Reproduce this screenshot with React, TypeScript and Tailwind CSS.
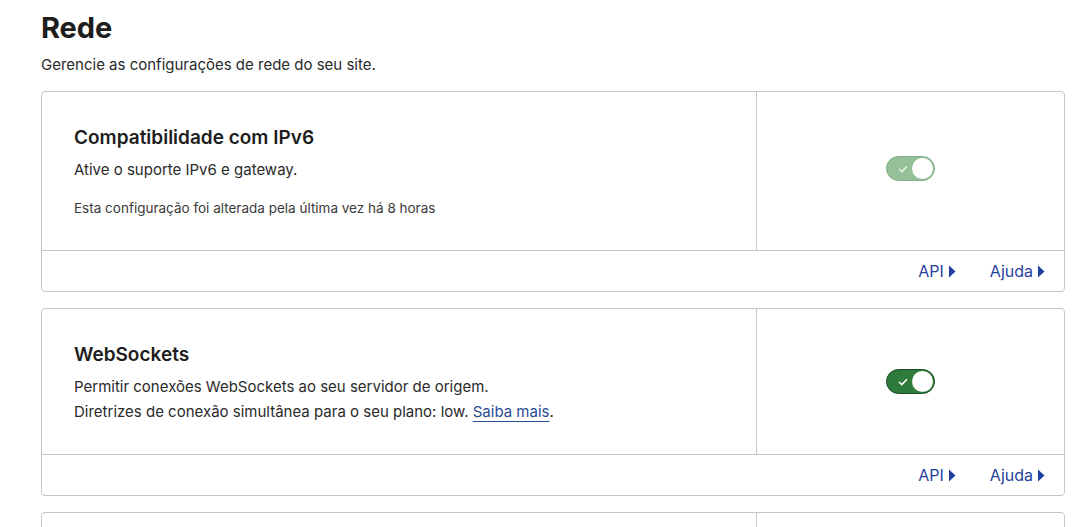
import React from "react";

function Caret() {
  return (
    <svg width="8" height="13" viewBox="0 0 8 13" className="ml-[4px]">
      <path d="M1 0.5 L7.5 6.5 L1 12.5 Z" fill="currentColor" />
    </svg>
  );
}

function Toggle({ faded }: { faded?: boolean }) {
  return (
    <div
      className={
        "flex h-[25px] w-[49px] items-center justify-between rounded-full border pl-[11px] pr-[1px] " +
        (faded ? "mb-[5px] border-[#86ad89] bg-[#94c197]" : "border-[#1c4a24] bg-[#2e7b3b]")
      }
    >
      <svg width="10" height="8" viewBox="0 0 10 8">
        <path d="M1 4 L3.8 6.6 L9 1.3" fill="none" stroke={faded ? "#e8f3e8" : "#ffffff"} strokeWidth="1.5" />
      </svg>
      <div className="h-[21px] w-[21px] rounded-full bg-white" />
    </div>
  );
}

function Card({
  title,
  children,
  faded,
  pb,
}: {
  title: string;
  children: React.ReactNode;
  faded?: boolean;
  pb: string;
}) {
  return (
    <div className="rounded-[4px] border border-[#c6c6c6] bg-white">
      <div className="flex">
        <div className={"w-[715px] border-r border-[#c6c6c6] px-[32px] pt-[33px] " + pb}>
          <div className="text-[19px] font-semibold leading-[26px] text-[#1d1d1d]">{title}</div>
          {children}
        </div>
        <div className="flex flex-1 items-center justify-center">
          <Toggle faded={faded} />
        </div>
      </div>
      <div className="flex h-[41px] items-center justify-end gap-[34px] border-t border-[#c6c6c6] pr-[19px] text-[16px] text-[#1f3f9c]">
        <span className="flex items-center">API<Caret /></span>
        <span className="flex items-center">Ajuda<Caret /></span>
      </div>
    </div>
  );
}

export default function App() {
  return (
    <div
      className="h-[527px] overflow-hidden bg-white pl-[41px] pr-[17px] pt-[11px] text-[#1d1d1d]"
      style={{ fontFamily: "Inter, 'Noto Sans', sans-serif" }}
    >
      <h1 className="text-[29px] font-bold leading-[34px] tracking-[-0.1px]">Rede</h1>
      <p className="mt-[9px] text-[15px] leading-[22px] text-[#2a2a2a]">
        Gerencie as configurações de rede do seu site.
      </p>
      <div className="mt-[15px] flex flex-col gap-[16px]">
        <Card title="Compatibilidade com IPv6" faded pb="pb-[32px]">
          <div className="mt-[6px] text-[15px] leading-[25px] text-[#2a2a2a]">Ative o suporte IPv6 e gateway.</div>
          <div className="mt-[16px] text-[13.5px] leading-[20px] text-[#3a3a3a]">
            Esta configuração foi alterada pela última vez há 8 horas
          </div>
        </Card>
        <Card title="WebSockets" pb="pb-[30px]">
          <div className="mt-[6px] text-[15px] leading-[25px] text-[#2a2a2a]">
            <div>Permitir conexões WebSockets ao seu servidor de origem.</div>
            <div>
              Diretrizes de conexão simultânea para o seu plano: low.{" "}
              <span className="text-[#2b4a94] underline decoration-[#2b4a94] underline-offset-[4px]">Saiba mais</span>.
            </div>
          </div>
        </Card>
        <div className="flex h-[120px] rounded-[4px] border border-[#c6c6c6] bg-white">
          <div className="w-[715px] border-r border-[#c6c6c6]" />
          <div className="flex-1" />
        </div>
      </div>
    </div>
  );
}
